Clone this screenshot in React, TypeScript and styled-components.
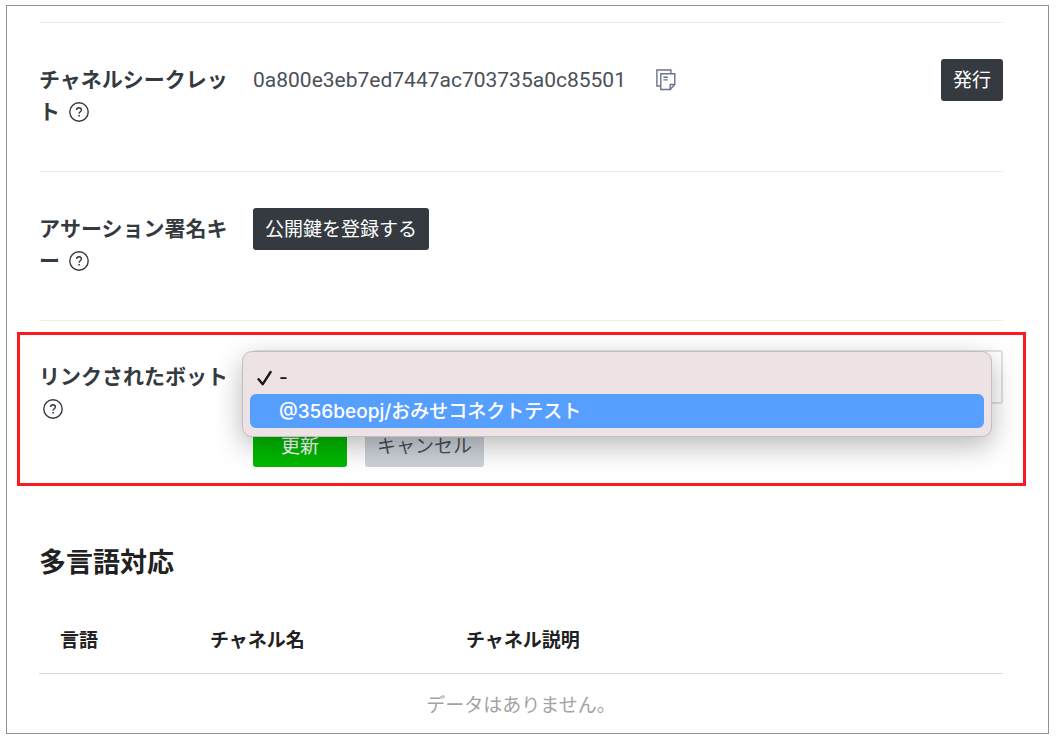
import React from "react";
import styled, { createGlobalStyle } from "styled-components";

const GlobalStyle = createGlobalStyle`
  *, *::before, *::after { box-sizing: border-box; }
  body {
    margin: 0;
    background: #fff;
    color: #353a40;
    font-family: Roboto, "Noto Sans CJK JP", sans-serif;
    font-size: 19px;
    line-height: 28px;
  }
  button, select { font: inherit; }
`;

const Page = styled.main`
  margin: 5px 7px 8px 6px;
  padding: 16px 45px 0 32px;
  border: 1px solid #919191;
`;

const Row = styled.section<{ $field?: boolean }>`
  position: relative;
  display: grid;
  grid-template-columns: 194px 1fr auto;
  column-gap: 20px;
  align-items: baseline;
  padding: ${(p) => (p.$field ? "29px 0 19px" : "36px 0 43px")};
  border-top: 1px solid #ebedef;
`;

const Label = styled.div`
  font-size: 21px;
  font-weight: 700;
  line-height: 32px;
  line-break: anywhere;
`;

const HelpButton = styled.button`
  display: inline-block;
  width: 20px;
  height: 20px;
  margin: 0 4px;
  padding: 0;
  border: 0;
  background: none;
  color: inherit;
  line-height: 0;
  vertical-align: -3px;
`;

const Value = styled.div`
  display: flex;
  align-items: center;
  gap: 30px;
`;

const Secret = styled.span`
  font-size: 21px;
  line-height: 32px;
  color: #4a5058;
`;

const IconButton = styled.button`
  display: flex;
  padding: 0;
  border: 0;
  background: none;
  color: #69728f;
`;

const tones = {
  dark: { background: "#353a40", color: "#fff" },
  green: { background: "#00b900", color: "#fff" },
  grey: { background: "#cdd2d9", color: "#4a4f57" },
};

const Button = styled.button<{ $tone: keyof typeof tones; $wide?: boolean }>`
  height: 42px;
  padding: 2px ${(p) => (p.$wide ? 28 : 12)}px 0;
  border: 0;
  border-radius: 3px;
  background: ${(p) => tones[p.$tone].background};
  color: ${(p) => tones[p.$tone].color};
  line-height: 28px;
  white-space: nowrap;
`;

const Field = styled.div`
  position: relative;
  grid-column: 2 / -1;
  display: flex;
  flex-direction: column;
  gap: 21px;
`;

const Select = styled.select`
  appearance: none;
  width: 100%;
  height: 54px;
  padding: 2px 16px 0;
  border: 2px solid #dfe1e7;
  border-radius: 3px;
  background: #fff;
  color: #353a40;
`;

const Actions = styled.div`
  display: flex;
  gap: 18px;
`;

const Menu = styled.ul`
  position: absolute;
  top: 1px;
  left: -11px;
  right: 11px;
  margin: 0;
  padding: 8px 7px;
  list-style: none;
  border: 1px solid #c3bdbf;
  border-radius: 10px;
  background: #ede3e4;
  box-shadow: 0 9px 28px rgba(0, 0, 0, 0.28);
  font-family: Inter, "Noto Sans CJK JP", sans-serif;
  font-weight: 500;
`;

const MenuItem = styled.li<{ $active?: boolean }>`
  display: grid;
  grid-template-columns: 16px 1fr;
  column-gap: 6px;
  align-items: center;
  height: 34px;
  padding: 2px 7px 0;
  border-radius: 6px;
  background: ${(p) => (p.$active ? "#579fff" : "transparent")};
  color: ${(p) => (p.$active ? "#fff" : "#1c1718")};
`;

const Highlight = styled.div`
  position: absolute;
  inset: 11px -23px 0 -22px;
  border: 3px solid #fb1a22;
  pointer-events: none;
`;

const Heading = styled.h2`
  margin: 57px 0 25px;
  color: #212121;
  font-size: 27px;
  font-weight: 700;
  line-height: 40px;
`;

const Table = styled.table`
  width: 100%;
  border-collapse: separate;
  border-spacing: 0;
  table-layout: fixed;
`;

const HeadCell = styled.th<{ $width?: number }>`
  width: ${(p) => (p.$width ? `${p.$width}px` : "auto")};
  padding: 19px 0 18px 21px;
  border-bottom: 1px solid #d9d9d9;
  color: #212121;
  font-weight: 700;
  text-align: left;
`;

const EmptyCell = styled.td`
  padding: 18px 0 13px;
  color: #a3a3a3;
  text-align: center;
`;

const Help = ({ label }: { label: string }) => (
  <HelpButton type="button" aria-label={label}>
    <svg width="20" height="20" viewBox="0 0 20 20" fill="none" stroke="currentColor" strokeWidth="1.4">
      <circle cx="10" cy="10" r="9.2" />
      <path d="M7.6 8.1c0-1.5 1-2.4 2.4-2.4s2.4.9 2.4 2.2c0 1.9-2.3 1.9-2.3 3.8" />
      <path d="M10.1 13v1.6" strokeWidth="1.6" />
    </svg>
  </HelpButton>
);

const CopyIcon = () => (
  <svg width="20" height="22" viewBox="0 0 20 22" fill="none" stroke="currentColor" strokeWidth="1.4">
    <path d="M4.5 17H.9V1h14v3.6" />
    <path d="M4.8 4.8h14v10.7l-4.6 5H4.8z" />
    <path d="M14.2 20.3v-4.8h4.6M7.4 8.2h4.4M7.4 10.9h4.4" />
  </svg>
);

const CheckIcon = () => (
  <svg width="16" height="16" viewBox="0 0 16 16" fill="none" stroke="currentColor" strokeWidth="2.4" strokeLinecap="round" strokeLinejoin="round">
    <path d="M1.6 9.2l4.2 5L13.6 2" />
  </svg>
);

const bots = ["-", "@356beopj/おみせコネクトテスト"];

export default function App() {
  return (
    <>
      <GlobalStyle />
      <Page lang="ja">
        <Row>
          <Label>
            チャネルシークレット <Help label="チャネルシークレットのヘルプ" />
          </Label>
          <Value>
            <Secret>0a800e3eb7ed7447ac703735a0c85501</Secret>
            <IconButton type="button" aria-label="コピー">
              <CopyIcon />
            </IconButton>
          </Value>
          <Button type="button" $tone="dark">発行</Button>
        </Row>

        <Row>
          <Label>
            アサーション署名キー <Help label="アサーション署名キーのヘルプ" />
          </Label>
          <Value>
            <Button type="button" $tone="dark">公開鍵を登録する</Button>
          </Value>
        </Row>

        <Row $field>
          <Label>
            <label htmlFor="linked-bot">リンクされたボット</label>{" "}
            <Help label="リンクされたボットのヘルプ" />
          </Label>
          <Field>
            <Select id="linked-bot" defaultValue="-">
              {bots.map((bot) => (
                <option key={bot}>{bot}</option>
              ))}
            </Select>
            <Actions>
              <Button type="button" $tone="green" $wide>更新</Button>
              <Button type="button" $tone="grey">キャンセル</Button>
            </Actions>
            <Menu role="listbox" aria-label="リンクされたボット">
              {bots.map((bot, i) => (
                <MenuItem key={bot} role="option" aria-selected={i === 0} $active={i === 1}>
                  {i === 0 ? <CheckIcon /> : <span />}
                  <span>{bot}</span>
                </MenuItem>
              ))}
            </Menu>
          </Field>
          <Highlight />
        </Row>

        <Heading>多言語対応</Heading>
        <Table>
          <thead>
            <tr>
              <HeadCell $width={150}>言語</HeadCell>
              <HeadCell $width={256}>チャネル名</HeadCell>
              <HeadCell>チャネル説明</HeadCell>
            </tr>
          </thead>
          <tbody>
            <tr>
              <EmptyCell colSpan={3}>データはありません。</EmptyCell>
            </tr>
          </tbody>
        </Table>
      </Page>
    </>
  );
}
